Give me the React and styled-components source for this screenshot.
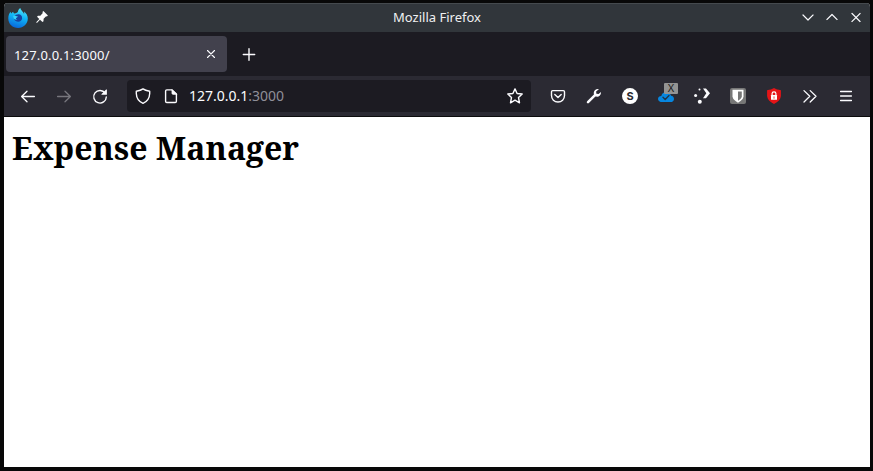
import React from "react";
import styled, { createGlobalStyle } from "styled-components";

const GlobalStyle = createGlobalStyle`
  * { box-sizing: border-box; }
  body { margin: 0; background: #080808; overflow: hidden; }
`;

const Desktop = styled.div`
  width: 873px;
  height: 471px;
  padding: 3px 3px 4px 4px;
  background: #080808;
  font-family: "Noto Sans", sans-serif;
`;

const Window = styled.div`
  display: flex;
  flex-direction: column;
  height: 464px;
  border-radius: 4px 4px 0 0;
  overflow: hidden;
  background: #fff;
`;

const TitleBar = styled.header`
  display: grid;
  grid-template-columns: 1fr auto 1fr;
  align-items: center;
  height: 29px;
  flex: none;
  background: #31363b;
  border-top: 1px solid #454a4e;
  padding: 0 2px 0 4px;
`;

const TitleIcons = styled.div`
  display: flex;
  align-items: center;
  gap: 6px;
`;

const WindowTitle = styled.span`
  padding: 0 2px 2px 0;
  font-size: 13px;
  line-height: 18px;
  color: #eff0f1;
`;

const WindowControls = styled.div`
  display: flex;
  justify-content: flex-end;
`;

const TabStrip = styled.nav`
  display: flex;
  align-items: center;
  height: 44px;
  flex: none;
  background: #1c1b22;
  padding: 0 2px;
`;

const Tab = styled.div`
  display: flex;
  align-items: center;
  justify-content: space-between;
  width: 221px;
  height: 36px;
  padding: 2px 4px 0 8px;
  border-radius: 4px;
  background: #42414d;
  color: #fbfbfe;
  font-size: 13px;
  letter-spacing: 0.17px;
`;

const NavBar = styled.div`
  display: flex;
  align-items: center;
  height: 41px;
  flex: none;
  background: #2b2a33;
  border-bottom: 1px solid #0c0c0d;
  padding: 0 6px;
`;

const AddressBar = styled.div`
  display: flex;
  align-items: center;
  width: 404px;
  height: 32px;
  margin: 0 9px;
  padding: 0 4px;
  border-radius: 4px;
  background: #1c1b22;
`;

const Address = styled.span`
  flex: 1;
  padding-left: 2px;
  font-size: 14px;
  line-height: 20px;
  color: #fbfbfe;
`;

const Port = styled.span`
  color: #8f8f98;
`;

const Button = styled.span`
  display: flex;
  align-items: center;
  justify-content: center;
  flex: none;
  width: ${(p) => p.$w || 36}px;
  height: 24px;
  color: ${(p) => (p.$dim ? "#77767d" : "#fbfbfe")};
`;

const Svg = styled.svg`
  display: block;
  flex: none;
  overflow: visible;
  fill: none;
  stroke: currentColor;
  stroke-width: 1.4;
  stroke-linecap: round;
  stroke-linejoin: round;
`;

const Page = styled.main`
  flex: 1;
  padding: 10px 8px;
  background: #fff;
`;

const Heading = styled.h1`
  margin: 0;
  font-family: "Noto Serif", "DejaVu Serif", serif;
  font-size: 32px;
  line-height: 42px;
  font-weight: 700;
  color: #000;
  white-space: nowrap;
`;

function Icon({ size = 16, children }) {
  return (
    <Svg width={size} height={size} viewBox={`0 0 ${size} ${size}`}>
      {children}
    </Svg>
  );
}

function FirefoxLogo() {
  return (
    <Icon size={20}>
      <defs>
        <linearGradient id="flame" x1="0.7" y1="0" x2="0.4" y2="1">
          <stop offset="0" stopColor="#54e6fb" />
          <stop offset="0.45" stopColor="#10b5f5" />
          <stop offset="1" stopColor="#0868dc" />
        </linearGradient>
      </defs>
      <g stroke="none">
        <path
          fill="url(#flame)"
          d="M2.4 3.7C2.7 4.5 3 5 3.4 5.4C3.9 4.7 4.4 4.2 5.1 3.8C5.2 4.7 5.7 5.3 6.5 5.5C8 5.2 9 5 9.8 4.1C9.9 2.4 11 1.1 12.3 0C12.7 1.9 14.1 2.8 15 4.3C15.7 5 15.7 5.5 16.1 6.1C16.4 5.1 16.2 4.2 16 3.4C18.4 5.1 19.8 7.6 19.8 10.5C19.8 15.9 15.5 19.9 10.1 19.9C4.6 19.9 0.3 15.8 0.3 10.4C0.3 7.8 1.1 5.5 2.4 3.7Z"
        />
        <path fill="#19439f" d="M6.3 8.1C7.4 6.7 9.1 6 11 6.2C13.2 6.6 14.2 8.2 14.1 10.2C13.9 12.5 12.1 14 9.9 13.8C7.4 13.6 5.8 11.7 6 9.5Z" />
        <path fill="#35d1fa" d="M5.1 7.9C6.3 7.2 7.6 7.8 8.6 8.2L10 8.5C9.6 9.4 8.4 9.5 8 10.3C7.8 11 8.6 11.4 9.5 11.3C8.2 12.3 6.6 11.6 5.9 10.6C5.4 9.7 5.6 8.7 5.1 7.9Z" />
      </g>
    </Icon>
  );
}

function Pin() {
  return (
    <Icon>
      <path fill="#fcfcfc" stroke="none" d="M9.4 1L13.9 5.5L12.9 6.5L12.1 6.2L9.6 8.7L9.5 11.2L8.5 12.1L6 9.7L2.9 12.9L2.2 12.2L5.3 9L3 6.7L4 5.8L6.3 5.7L8.8 3.1L8.4 2Z" />
    </Icon>
  );
}

export default function App() {
  return (
    <>
      <GlobalStyle />
      <Desktop>
        <Window>
          <TitleBar>
            <TitleIcons>
              <FirefoxLogo />
              <Pin />
            </TitleIcons>
            <WindowTitle>Mozilla Firefox</WindowTitle>
            <WindowControls>
              <Button $w={24}><Icon><path strokeLinecap="square" strokeWidth="1.2" d="M3 5L8 10L13 5" /></Icon></Button>
              <Button $w={24}><Icon><path strokeLinecap="square" strokeWidth="1.2" d="M3 9.5L8 4.5L13 9.5" /></Icon></Button>
              <Button $w={24}><Icon><path strokeLinecap="square" strokeWidth="1.2" d="M4 3.5L12 11.5M12 3.5L4 11.5" /></Icon></Button>
            </WindowControls>
          </TitleBar>

          <TabStrip>
            <Tab>
              <span>127.0.0.1:3000/</span>
              <Button $w={24}><Icon><path strokeWidth="1.1" d="M4.5 3.5L11.5 10.5M11.5 3.5L4.5 10.5" /></Icon></Button>
            </Tab>
            <Button $w={43}><Icon><path strokeWidth="1.4" d="M8 2.8V14.2M2.3 8.5H13.7" /></Icon></Button>
          </TabStrip>

          <NavBar>
            <Button><Icon><path strokeWidth="1.3" d="M14.4 8.5H1.7M7 3.2L1.6 8.5L7 13.8" /></Icon></Button>
            <Button $dim><Icon><path strokeWidth="1.3" d="M1.6 8.5H14.3M9 3.2L14.4 8.5L9 13.8" /></Icon></Button>
            <Button>
              <Icon>
                <path d="M13.2 5.2A6.3 6.3 0 1 0 14.3 8.9" />
                <path fill="currentColor" stroke="none" d="M14.9 1.8V6.8H9.9C9.3 6.8 9.3 6.4 9.6 6.1L14.1 1.6C14.4 1.3 14.9 1.4 14.9 1.8Z" />
              </Icon>
            </Button>
            <AddressBar>
              <Button $w={24}><Icon><path d="M8 .9C6.3 2.3 3.9 2.9 1.3 3.2V5.5C1.5 10.2 4.2 13.8 8 15.3C11.8 13.8 14.5 10.2 14.7 5.5V3.2C12.1 2.9 9.7 2.3 8 .9Z" /></Icon></Button>
              <Button $w={32}>
                <Icon>
                  <path d="M3.8 1.9H9.1L13.4 6.1V13.2C13.4 14 12.9 14.5 12.1 14.5H3.8C3 14.5 2.6 14 2.6 13.2V3.1C2.6 2.3 3 1.9 3.8 1.9Z" />
                  <path fill="currentColor" d="M9 2V5.3C9 5.9 9.4 6.3 10 6.3H13.3Z" strokeWidth=".8" />
                </Icon>
              </Button>
              <Address>127.0.0.1<Port>:3000</Port></Address>
              <Button $w={24}><Icon><path d="M8 .9L10.1 5.5L15.2 6L11.5 9.5L12.5 14.8L8 12.2L3.5 14.8L4.5 9.5L.8 6L5.9 5.5Z" /></Icon></Button>
            </AddressBar>

            <Button>
              <Icon>
                <path d="M2.7 2.6H13.3C14.1 2.6 14.5 3 14.5 3.8V7.5C14.5 11.3 11.7 14 8 14S1.5 11.3 1.5 7.5V3.8C1.5 3 1.9 2.6 2.7 2.6Z" />
                <path d="M4.8 6.4L8 9.6L11.2 6.4" />
              </Icon>
            </Button>
            <Button>
              <Icon>
                <path d="M2 14.1L8.8 7.3" strokeWidth="2.5" />
                <path fill="currentColor" stroke="none" d="M12.9 1.3C10.7.6 8.2 2 7.8 4.4C7.6 6.4 8.3 8 9.8 8.6C12.5 9.4 15.3 7.2 14.9 4L12.6 6L10.4 5.7L10.1 3.6Z" />
              </Icon>
            </Button>
            <Button>
              <Icon>
                <circle cx="8" cy="8.1" r="8" fill="#fff" stroke="none" />
                <text x="8" y="12" textAnchor="middle" fill="#29292e" stroke="none" fontSize="11" fontWeight="700" fontFamily="Inter">S</text>
              </Icon>
            </Button>
            <Button>
              <Icon>
                <path fill="#0786df" stroke="none" d="M4.7 14C2 14.1 0 12.9 0 10.9C0 9 1.5 7.9 3.3 7.9C3.9 5.3 6 3.8 8.6 3.9C11.1 4 12.7 5.7 13 7.8C14.9 8 16 9.1 16 10.9C16 12.8 14.5 14 12.5 14Z" />
                <path stroke="#20364b" d="M5 9.3L7.2 11.4L11 7.5" />
                <rect x="6" y="-5" width="14" height="11" rx="1" fill="#939393" stroke="none" />
                <text x="13" y="4.2" textAnchor="middle" fill="#1a1a1a" stroke="none" fontSize="11" fontFamily="Noto Sans">X</text>
              </Icon>
            </Button>
            <Button>
              <Icon>
                <g fill="currentColor" stroke="none">
                  <circle cx="5.5" cy="1.4" r="1" />
                  <circle cx="1.6" cy="7.6" r="1.5" />
                  <circle cx="5.8" cy="13.8" r="2" />
                  <path d="M9 .5H12L16 5.3L12 10.2H9L12.3 5.3Z" />
                </g>
              </Icon>
            </Button>
            <Button>
              <Icon>
                <rect width="16" height="16" rx="2" fill="#777" stroke="none" />
                <path fill="#fff" stroke="none" d="M2.5 1.7H13.5V8.3C13.5 11.1 11 13 8 14.7C5 13 2.5 11.1 2.5 8.3Z" />
                <path fill="#777" stroke="none" d="M8 3.4H11.8V8.2C11.8 10.1 10 11.5 8 12.7Z" />
              </Icon>
            </Button>
            <Button>
              <Icon>
                <path fill="#e51417" stroke="none" d="M8 .1C9.8 1.4 12.2 2 14.9 2.2V8C14.7 11.3 12.2 14 8 16C3.8 14 1.3 11.3 1.1 8V2.2C3.8 2 6.2 1.4 8 .1Z" />
                <rect x="5" y="7" width="6" height="4.8" rx=".4" fill="#fff" stroke="none" />
                <path stroke="#fff" strokeWidth="1.2" d="M6.1 7V5.5C6.1 3.3 9.9 3.3 9.9 5.5V7" />
                <path stroke="#e51417" strokeWidth=".8" d="M8 8.8V10.3" />
              </Icon>
            </Button>
            <Button><Icon><path strokeWidth="1.3" d="M2 2.6L7.8 8.3L2 14M8.2 2.6L14 8.3L8.2 14" /></Icon></Button>
            <Button><Icon><path strokeWidth="1.4" d="M2.6 3.5H13.4M2.6 8H13.4M2.6 12.5H13.4" /></Icon></Button>
          </NavBar>

          <Page>
            <Heading>Expense Manager</Heading>
          </Page>
        </Window>
      </Desktop>
    </>
  );
}
